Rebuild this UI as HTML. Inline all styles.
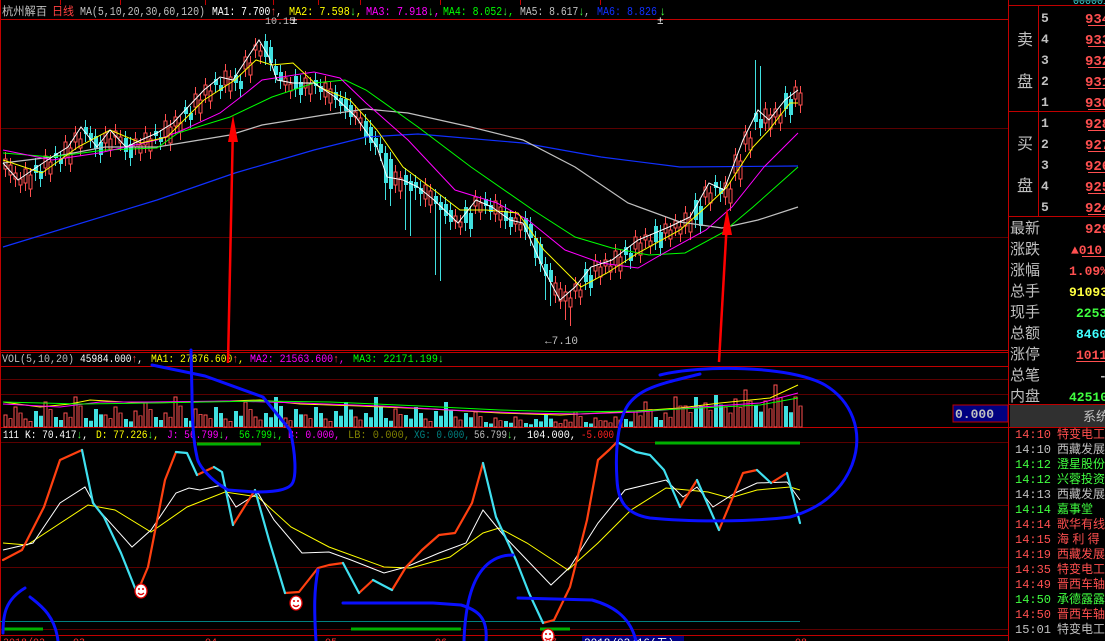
<!DOCTYPE html>
<html><head><meta charset="utf-8"><style>
html,body{margin:0;padding:0;background:#000;overflow:hidden}
svg{display:block}
text{font-family:"Liberation Mono","WenQuanYi Zen Hei","Noto Sans CJK SC",monospace}
.c{font-family:"Liberation Sans","WenQuanYi Zen Hei","Noto Sans CJK SC",sans-serif}
</style></head><body>
<svg width="1105" height="641" viewBox="0 0 1105 641" xmlns="http://www.w3.org/2000/svg" xmlns:xlink="http://www.w3.org/1999/xlink">
<rect width="1105" height="641" fill="#000"/>
<g stroke="#5a0000" stroke-width="1">
<line x1="0" y1="128.5" x2="1008" y2="128.5"/><line x1="0" y1="237.5" x2="1008" y2="237.5"/>
<line x1="0" y1="379.5" x2="1008" y2="379.5"/><line x1="0" y1="394.5" x2="1008" y2="394.5"/>
<line x1="0" y1="442.5" x2="1008" y2="442.5"/><line x1="0" y1="505.5" x2="1008" y2="505.5"/>
<line x1="0" y1="567.5" x2="1008" y2="567.5"/><line x1="0" y1="629.5" x2="1008" y2="629.5"/>
</g>
<g stroke="#c00000" stroke-width="1">
<line x1="0" y1="19.5" x2="1008" y2="19.5"/><line x1="0" y1="350.5" x2="1008" y2="350.5"/>
<line x1="0" y1="352.5" x2="1008" y2="352.5"/><line x1="0" y1="366.5" x2="1008" y2="366.5"/>
<line x1="0" y1="427.5" x2="1008" y2="427.5"/><line x1="0" y1="635.5" x2="1008" y2="635.5"/>
<line x1="0.5" y1="0" x2="0.5" y2="641"/>
<line x1="1008.5" y1="0" x2="1008.5" y2="641"/>
<line x1="205.5" y1="0" x2="205.5" y2="5"/><line x1="273.5" y1="0" x2="273.5" y2="5"/><line x1="318.5" y1="0" x2="318.5" y2="5"/><line x1="360.5" y1="0" x2="360.5" y2="5"/><line x1="60.5" y1="0" x2="60.5" y2="5"/><line x1="120.5" y1="0" x2="120.5" y2="5"/><line x1="440.5" y1="0" x2="440.5" y2="5"/><line x1="520.5" y1="0" x2="520.5" y2="5"/><line x1="600.5" y1="0" x2="600.5" y2="5"/>
</g>
<g id="cd">
<path stroke="#ff5050" stroke-width="1" fill="none" d="M5.5 152V177M15.5 166V187M25.5 162V191M45.5 149V176M65.5 135V166M75.5 126V150M105.5 126V151M115.5 124V145M135.5 132V155M145.5 126V153M165.5 114V145M175.5 110V134M195.5 87V115M205.5 78V103M225.5 64V93M245.5 50V77M255.5 38V58M285.5 71V93M305.5 71V96M325.5 76V105M355.5 105V125M395.5 165V193M425.5 178V207M455.5 209V229M475.5 190V214M495.5 194V222M515.5 211V232M555.5 276V303M565.5 285V320M575.5 277V299M595.5 254V279M605.5 253V274M615.5 244V273M635.5 230V257M645.5 228V248M665.5 217V241M675.5 214V236M685.5 206V234M705.5 180V205M725.5 176V205M735.5 148V181M745.5 125V152M765.5 102V131M775.5 102V125M795.5 80V107"/>
<path stroke="#40e0e0" stroke-width="1" fill="none" d="M35.5 158V181M55.5 146V166M85.5 120V142M95.5 129V157M125.5 131V160M155.5 124V144M185.5 100V122M215.5 72V93M235.5 68V91M265.5 34V65M275.5 59V83M295.5 69V97M315.5 73V94M335.5 85V108M345.5 92V119M365.5 114V145M375.5 131V155M385.5 146V200M405.5 168V230M415.5 175V200M435.5 189V275M445.5 197V224M465.5 200V231M485.5 192V214M505.5 204V229M525.5 211V240M535.5 231V266M545.5 257V300M585.5 262V290M625.5 240V263M655.5 219V250M695.5 193V228M715.5 175V196M755.5 60V130M785.5 86V117"/>
<path stroke="#ff5050" stroke-width="1" fill="#000" d="M4 159h3v10h-3zM14 173h3v6h-3zM24 169h3v14h-3zM44 156h3v12h-3zM64 142h3v16h-3zM74 133h3v9h-3zM104 133h3v10h-3zM114 131h3v6h-3zM134 139h3v8h-3zM144 133h3v12h-3zM164 121h3v16h-3zM174 117h3v9h-3zM194 94h3v13h-3zM204 85h3v10h-3zM224 71h3v14h-3zM244 57h3v12h-3zM254 45h3v5h-3zM284 78h3v7h-3zM304 78h3v10h-3zM324 83h3v14h-3zM354 112h3v5h-3zM394 172h3v13h-3zM424 185h3v14h-3zM454 216h3v5h-3zM474 197h3v9h-3zM494 201h3v13h-3zM514 218h3v6h-3zM554 283h3v12h-3zM564 292h3v9h-3zM574 284h3v7h-3zM594 261h3v10h-3zM604 260h3v6h-3zM614 251h3v14h-3zM634 237h3v12h-3zM644 235h3v5h-3zM664 224h3v9h-3zM674 221h3v7h-3zM684 213h3v13h-3zM704 187h3v10h-3zM724 183h3v14h-3zM734 155h3v18h-3zM744 132h3v12h-3zM764 109h3v14h-3zM774 109h3v8h-3zM794 87h3v12h-3z"/>
<path fill="#40e0e0" d="M34 165h4v8h-4zM54 153h4v5h-4zM84 127h4v7h-4zM94 136h4v13h-4zM124 138h4v14h-4zM154 131h4v5h-4zM184 107h4v7h-4zM214 79h4v6h-4zM234 75h4v8h-4zM264 41h4v16h-4zM274 66h4v9h-4zM294 76h4v13h-4zM314 80h4v6h-4zM334 92h4v8h-4zM344 99h4v12h-4zM364 121h4v16h-4zM374 138h4v9h-4zM384 153h4v30h-4zM404 175h4v10h-4zM414 182h4v6h-4zM434 196h4v8h-4zM444 204h4v12h-4zM464 207h4v16h-4zM484 199h4v7h-4zM504 211h4v10h-4zM524 218h4v14h-4zM534 238h4v20h-4zM544 264h4v12h-4zM584 269h4v13h-4zM624 247h4v8h-4zM654 226h4v16h-4zM694 200h4v20h-4zM714 182h4v6h-4zM754 113h4v9h-4zM784 93h4v16h-4z"/>
</g>
<use xlink:href="#cd" href="#cd" transform="translate(5,6)"/>
<g fill="none">
<polyline stroke="#1030ff" stroke-width="1.2" points="3,247 157,200 235,173 314,150 366,137 418,134 523,143 601,157 680,167 798,166"/>
<polyline stroke="#c0c0c0" stroke-width="1.2" points="3,163 52,157 105,147 157,147 230,135 262,125 324,115 366,109 408,113 471,127 523,140 575,167 628,203 680,222 722,228 758,220 798,207"/>
<polyline stroke="#00ff00" points="3,153 52,157 105,150 157,148 178,133 230,117 272,97 314,83 345,80 366,90 418,127 471,167 533,210 575,237 612,248 649,255 685,253 722,233 753,207 798,167"/>
<polyline stroke="#ff00ff" points="3,150 52,160 99,153 157,140 183,130 220,113 246,93 262,80 314,72 340,78 366,103 408,140 455,190 497,203 528,220 565,250 601,263 638,268 664,253 706,230 732,207 764,167 798,133"/>
<polyline stroke="#ffff00" points="3,160 42,173 78,147 110,130 141,143 167,137 204,100 235,80 256,60 272,65 293,63 319,87 350,100 377,130 403,167 434,190 460,210 486,210 518,213 544,250 581,287 607,273 638,253 680,230 706,207 727,187 753,147 769,130 790,103 798,103"/>
<polyline stroke="#ffffff" points="3,163 18,180 37,167 52,157 68,147 81,127 97,147 110,130 126,147 141,140 157,133 173,123 188,107 204,90 220,77 233,80 246,60 259,40 269,57 277,80 293,83 314,83 335,97 356,117 377,147 387,177 403,180 418,187 434,200 458,223 476,200 492,207 510,220 523,223 544,270 560,300 575,287 591,267 612,260 638,240 669,227 690,217 709,183 724,190 743,140 758,110 769,120 785,100 798,90"/>
</g>
<g id="vb">
<path stroke="#ff5050" fill="none" d="M4 415h3v12h-3zM14 407h3v20h-3zM24 419h3v8h-3zM44 402h3v25h-3zM64 413h3v14h-3zM74 397h3v30h-3zM104 415h3v12h-3zM114 407h3v20h-3zM134 411h3v16h-3zM144 402h3v25h-3zM164 413h3v14h-3zM174 397h3v30h-3zM194 409h3v18h-3zM204 415h3v12h-3zM224 419h3v8h-3zM244 402h3v25h-3zM254 417h3v10h-3zM284 418h3v9h-3zM304 415h3v12h-3zM324 419h3v8h-3zM354 417h3v10h-3zM394 409h3v18h-3zM424 419h3v8h-3zM454 417h3v10h-3zM474 412h3v15h-3zM494 418h3v9h-3zM514 417h3v10h-3zM554 422h3v5h-3zM564 420h3v7h-3zM574 412h3v15h-3zM594 418h3v9h-3zM604 421h3v6h-3zM614 417h3v10h-3zM634 411h3v16h-3zM644 402h3v25h-3zM664 413h3v14h-3zM674 397h3v30h-3zM684 406h3v21h-3zM704 403h3v24h-3zM724 407h3v20h-3zM734 399h3v28h-3zM744 390h3v37h-3zM764 401h3v26h-3zM774 385h3v42h-3zM794 397h3v30h-3z"/>
<path fill="#40e0e0" d="M34 411h4v16h-4zM54 417h4v10h-4zM84 418h4v9h-4zM94 409h4v18h-4zM124 419h4v8h-4zM154 417h4v10h-4zM184 418h4v9h-4zM214 407h4v20h-4zM234 411h4v16h-4zM264 413h4v14h-4zM274 397h4v30h-4zM294 409h4v18h-4zM314 407h4v20h-4zM334 411h4v16h-4zM344 402h4v25h-4zM364 413h4v14h-4zM374 397h4v30h-4zM384 418h4v9h-4zM404 415h4v12h-4zM414 407h4v20h-4zM434 411h4v16h-4zM444 402h4v25h-4zM464 413h4v14h-4zM484 422h4v5h-4zM504 421h4v6h-4zM524 423h4v4h-4zM534 419h4v8h-4zM544 415h4v12h-4zM584 422h4v5h-4zM624 419h4v8h-4zM654 417h4v10h-4zM694 397h4v30h-4zM714 395h4v32h-4zM754 405h4v22h-4zM784 406h4v21h-4z"/>
</g>
<use xlink:href="#vb" href="#vb" transform="translate(5,427) scale(1,0.7) translate(0,-427)"/>
<g fill="none">
<polyline stroke="#ffff00" points="3,402 40,407 70,404 90,400 140,403 200,402 260,400 300,404 360,406 430,409 500,413 560,415 620,412 680,408 720,403 770,398 798,385"/>
<polyline stroke="#ff00ff" points="3,404 60,407 100,402 150,402 230,401 300,403 380,406 450,410 520,413 580,414 640,412 700,407 760,403 798,393"/>
<polyline stroke="#00ff00" points="3,402 80,404 150,403 260,401 330,402 420,406 500,410 570,412 640,411 700,408 760,405 798,398"/>
</g>
<g font-size="12" fill="#c0c0c0">
<text x="2" y="15" class="c" font-size="11.5" textLength="45" lengthAdjust="spacingAndGlyphs" fill="#c0c0c0">杭州解百</text>
<text x="52" y="15" class="c" font-size="11.5" textLength="22" lengthAdjust="spacingAndGlyphs" fill="#ff4040">日线</text>
<text x="80" y="15" textLength="125" lengthAdjust="spacingAndGlyphs">MA(5,10,20,30,60,120)</text>
<text x="212" y="15" fill="#fff" textLength="70" lengthAdjust="spacingAndGlyphs">MA1: 7.700<tspan fill="#ff4040">↑</tspan>,</text>
<text x="289" y="15" fill="#ffff00" textLength="73" lengthAdjust="spacingAndGlyphs">MA2: 7.598<tspan fill="#40ff40">↓</tspan>,</text>
<text x="366" y="15" fill="#ff00ff" textLength="74" lengthAdjust="spacingAndGlyphs">MA3: 7.918<tspan fill="#40ff40">↓</tspan>,</text>
<text x="443" y="15" fill="#00ff00" textLength="71" lengthAdjust="spacingAndGlyphs">MA4: 8.052<tspan fill="#40ff40">↓</tspan>,</text>
<text x="520" y="15" fill="#c0c0c0" textLength="70" lengthAdjust="spacingAndGlyphs">MA5: 8.617<tspan fill="#40ff40">↓</tspan>,</text>
<text x="597" y="15" fill="#1030ff" textLength="60" lengthAdjust="spacingAndGlyphs">MA6: 8.826</text>
<text x="659" y="15" fill="#40ff40">↓</text>
<text x="265" y="24" fill="#c0c0c0" font-size="10">10.15</text>
<text x="291" y="24" fill="#fff" font-size="11">±</text>
<text x="657" y="24" fill="#fff" font-size="11">±</text>
<text x="545" y="344" fill="#c0c0c0" font-size="11">←7.10</text>
</g>
<g font-size="11" fill="#c0c0c0">
<text x="2" y="362" textLength="72" lengthAdjust="spacingAndGlyphs">VOL(5,10,20)</text>
<text x="80" y="362" fill="#fff" textLength="63" lengthAdjust="spacingAndGlyphs">45984.000<tspan fill="#ff4040">↑</tspan>,</text>
<text x="151" y="362" fill="#ffff00" textLength="93" lengthAdjust="spacingAndGlyphs">MA1: 27876.600<tspan fill="#ff4040">↑</tspan>,</text>
<text x="250" y="362" fill="#ff00ff" textLength="95" lengthAdjust="spacingAndGlyphs">MA2: 21563.600<tspan fill="#ff4040">↑</tspan>,</text>
<text x="353" y="362" fill="#00ff00" textLength="91" lengthAdjust="spacingAndGlyphs">MA3: 22171.199<tspan fill="#40ff40">↓</tspan></text>
<text x="3" y="438" fill="#fff" textLength="16" lengthAdjust="spacingAndGlyphs">111</text>
<text x="25" y="438" fill="#fff" textLength="63" lengthAdjust="spacingAndGlyphs">K: 70.417<tspan fill="#40ff40">↓</tspan>,</text>
<text x="96" y="438" fill="#ffff00" textLength="63" lengthAdjust="spacingAndGlyphs">D: 77.226<tspan fill="#40ff40">↓</tspan>,</text>
<text x="167" y="438" fill="#ff00ff" textLength="63" lengthAdjust="spacingAndGlyphs">J: 56.799<tspan fill="#40ff40">↓</tspan>,</text>
<text x="239" y="438" fill="#00ff00" textLength="44" lengthAdjust="spacingAndGlyphs">56.799<tspan fill="#40ff40">↓</tspan>,</text>
<text x="288" y="438" fill="#ff00ff" textLength="52" lengthAdjust="spacingAndGlyphs">B: 0.000,</text>
<text x="348" y="438" fill="#808000" textLength="62" lengthAdjust="spacingAndGlyphs">LB: 0.000,</text>
<text x="414" y="438" fill="#008080" textLength="56" lengthAdjust="spacingAndGlyphs">XG: 0.000,</text>
<text x="474" y="438" fill="#c0c0c0" textLength="44" lengthAdjust="spacingAndGlyphs">56.799<tspan fill="#40ff40">↓</tspan>,</text>
<text x="527" y="438" fill="#fff" textLength="49" lengthAdjust="spacingAndGlyphs">104.000,</text>
<text x="581" y="438" fill="#ff2020" textLength="33" lengthAdjust="spacingAndGlyphs">-5.000</text>
</g>
<line x1="0" y1="621.5" x2="800" y2="621.5" stroke="#008080"/>
<g fill="none">
<polyline stroke="#ffff00" points="3,543 27,545 88,505 115,510 151,532 187,507 225,492 258,497 291,527 329,547 384,567 411,568 450,557 483,533 499,528 527,543 568,570 598,543 631,510 666,488 708,492 730,498 757,490 790,487 800,490"/>
<polyline stroke="#ffffff" points="3,550 33,543 60,503 85,487 96,507 132,547 151,530 176,493 189,488 200,490 222,485 236,507 258,493 274,520 302,553 329,552 351,560 384,573 406,567 439,553 466,543 483,510 505,537 527,560 551,585 570,567 598,523 625,490 666,480 683,497 697,487 713,507 735,493 757,483 787,482 800,500"/>
</g>
<g fill="none" stroke-width="2.2" stroke-linecap="round" stroke-linejoin="round">
<g stroke="#ff4010">
<polyline points="3,560 22,550 44,507 60,460 82,450"/>
<polyline points="137,593 148,567 165,480 176,452"/>
<polyline points="197,475 214,467"/>
<polyline points="233,525 255,490"/>
<polyline points="285,593 299,592 318,568 329,565 343,563"/>
<polyline points="359,593 373,580"/>
<polyline points="392,590 406,567 422,550 439,535 455,533 472,503 483,463"/>
<polyline points="543,623 554,620 570,587 587,520 598,460 609,450 617,442"/>
<polyline points="680,507 697,480"/>
<polyline points="719,530 743,473 757,470"/>
<polyline points="771,483 787,473"/>
</g>
<g stroke="#40e0f0">
<polyline points="82,450 93,503 104,517 121,553 137,593"/>
<polyline points="176,452 187,453 197,475"/>
<polyline points="214,467 222,472 233,525"/>
<polyline points="255,490 269,540 285,593"/>
<polyline points="343,563 359,593"/>
<polyline points="373,580 392,590"/>
<polyline points="483,463 496,517 516,560 529,593 543,623"/>
<polyline points="617,442 636,452 650,455 664,470 680,507"/>
<polyline points="697,480 719,530"/>
<polyline points="757,470 771,483"/>
<polyline points="787,473 800,523"/>
</g>
</g>
<g stroke="#00b000" stroke-width="3">
<line x1="197" y1="444" x2="261" y2="444"/><line x1="655" y1="443" x2="800" y2="443"/>
<line x1="3" y1="629" x2="43" y2="629"/><line x1="351" y1="629" x2="461" y2="629"/><line x1="540" y1="629" x2="570" y2="629"/>
</g>
<g stroke="#e00000" stroke-width="1.3">
<ellipse cx="141" cy="591" rx="6" ry="7" fill="#fff"/><ellipse cx="296" cy="603" rx="6" ry="7" fill="#fff"/><ellipse cx="548" cy="636" rx="6" ry="7" fill="#fff"/>
<path fill="none" d="M138 593Q141 596 144 593M293 605Q296 608 299 605M545 638Q548 641 551 638"/>
</g>
<g fill="#e00000"><circle cx="139" cy="589" r="1"/><circle cx="143" cy="589" r="1"/><circle cx="294" cy="601" r="1"/><circle cx="298" cy="601" r="1"/><circle cx="546" cy="634" r="1"/><circle cx="550" cy="634" r="1"/></g>
<g fill="#ff3030" font-size="10"><text x="3" y="645">2018/02</text><text x="73" y="645">03</text><text x="205" y="645">04</text><text x="325" y="645">05</text><text x="435" y="645">06</text><text x="545" y="645">07</text><text x="795" y="645">08</text></g>
<rect x="582" y="636" width="102" height="6" fill="#000080"/>
<text x="584" y="646" fill="#fff" font-size="11">2018/03/16(五)</text>
<g stroke="#c00000" stroke-width="1" fill="none">
<line x1="1009" y1="5.5" x2="1105" y2="5.5"/><line x1="1009" y1="111.5" x2="1105" y2="111.5"/>
<line x1="1009" y1="216.5" x2="1105" y2="216.5"/><line x1="1038.5" y1="5" x2="1038.5" y2="216"/>
<line x1="1009" y1="404.5" x2="1105" y2="404.5"/><line x1="1009" y1="427.5" x2="1105" y2="427.5"/>
</g>
<rect x="1010" y="405" width="95" height="22" fill="#303030"/>
<text x="1083" y="421" class="c" font-size="13" fill="#c0c0c0">系统</text>
<rect x="953" y="405" width="55" height="17" fill="#000080" stroke="#c00000"/>
<text x="955" y="418" fill="#c0c0c0" font-size="13" font-weight="bold">0.000</text>
<text x="1073" y="4" fill="#40e0e0" font-size="10">000001</text>
<g class="c" font-size="16" fill="#c0c0c0">
<text x="1017" y="45">卖</text><text x="1017" y="87">盘</text><text x="1017" y="149">买</text><text x="1017" y="191">盘</text>
</g>
<g font-size="13" fill="#c0c0c0" font-weight="bold">
<text x="1041" y="22">5</text><text x="1041" y="43">4</text><text x="1041" y="64">3</text><text x="1041" y="85">2</text><text x="1041" y="106">1</text>
<text x="1041" y="127">1</text><text x="1041" y="148">2</text><text x="1041" y="169">3</text><text x="1041" y="190">4</text><text x="1041" y="211">5</text>
</g>
<g font-size="14" fill="#ff5050" font-weight="bold">
<text x="1085" y="23">934</text><text x="1085" y="44">933</text><text x="1085" y="65">932</text><text x="1085" y="86">931</text><text x="1085" y="107">930</text>
<text x="1085" y="128">928</text><text x="1085" y="149">927</text><text x="1085" y="170">926</text><text x="1085" y="191">925</text><text x="1085" y="212">924</text>
<text x="1085" y="233">929</text>
</g>
<g stroke="#ff5050" stroke-width="1"><line x1="1088" y1="25.5" x2="1105" y2="25.5"/><line x1="1088" y1="46.5" x2="1105" y2="46.5"/><line x1="1088" y1="67.5" x2="1105" y2="67.5"/><line x1="1088" y1="88.5" x2="1105" y2="88.5"/><line x1="1088" y1="109.5" x2="1105" y2="109.5"/><line x1="1088" y1="130.5" x2="1105" y2="130.5"/><line x1="1088" y1="151.5" x2="1105" y2="151.5"/><line x1="1088" y1="172.5" x2="1105" y2="172.5"/><line x1="1088" y1="193.5" x2="1105" y2="193.5"/><line x1="1088" y1="214.5" x2="1105" y2="214.5"/><line x1="1082" y1="256.5" x2="1105" y2="256.5"/><line x1="1076" y1="361.5" x2="1105" y2="361.5"/></g>
<g class="c" font-size="15" fill="#c0c0c0">
<text x="1010" y="233">最新</text><text x="1010" y="254">涨跌</text><text x="1010" y="275">涨幅</text><text x="1010" y="296">总手</text><text x="1010" y="317">现手</text><text x="1010" y="338">总额</text><text x="1010" y="359">涨停</text><text x="1010" y="380">总笔</text><text x="1010" y="401">内盘</text>
</g>
<g font-size="13" font-weight="bold">
<text x="1071" y="254" fill="#ff5050">▲010</text>
<text x="1069" y="275" fill="#ff5050">1.09%</text>
<text x="1069" y="296" fill="#ffff40">91093</text>
<text x="1076" y="317" fill="#40ff40">2253</text>
<text x="1076" y="338" fill="#40ffff">8460</text>
<text x="1076" y="359" fill="#ff5050">1011</text>
<text x="1099" y="380" fill="#c0c0c0">-</text>
<text x="1069" y="401" fill="#40ff40">42510</text>
</g>
<g font-size="12">
<text x="1015" y="438" fill="#ff5050">14:10</text><text x="1057" y="438" class="c" fill="#ff5050">特变电工</text>
<text x="1015" y="453" fill="#c0c0c0">14:10</text><text x="1057" y="453" class="c" fill="#c0c0c0">西藏发展</text>
<text x="1015" y="468" fill="#40ff40">14:12</text><text x="1057" y="468" class="c" fill="#40ff40">澄星股份</text>
<text x="1015" y="483" fill="#40ff40">14:12</text><text x="1057" y="483" class="c" fill="#40ff40">兴蓉投资</text>
<text x="1015" y="498" fill="#c0c0c0">14:13</text><text x="1057" y="498" class="c" fill="#c0c0c0">西藏发展</text>
<text x="1015" y="513" fill="#40ff40">14:14</text><text x="1057" y="513" class="c" fill="#40ff40">嘉事堂</text>
<text x="1015" y="528" fill="#ff5050">14:14</text><text x="1057" y="528" class="c" fill="#ff5050">歌华有线</text>
<text x="1015" y="543" fill="#ff5050">14:15</text><text x="1057" y="543" class="c" fill="#ff5050">海 利 得</text>
<text x="1015" y="558" fill="#ff5050">14:19</text><text x="1057" y="558" class="c" fill="#ff5050">西藏发展</text>
<text x="1015" y="573" fill="#ff5050">14:35</text><text x="1057" y="573" class="c" fill="#ff5050">特变电工</text>
<text x="1015" y="588" fill="#ff5050">14:49</text><text x="1057" y="588" class="c" fill="#ff5050">晋西车轴</text>
<text x="1015" y="603" fill="#40ff40">14:50</text><text x="1057" y="603" class="c" fill="#40ff40">承德露露</text>
<text x="1015" y="618" fill="#ff5050">14:50</text><text x="1057" y="618" class="c" fill="#ff5050">晋西车轴</text>
<text x="1015" y="633" fill="#c0c0c0">15:01</text><text x="1057" y="633" class="c" fill="#c0c0c0">特变电工</text>
</g>
<g fill="#ff0000" stroke="#ff0000">
<line x1="228" y1="363" x2="233" y2="125" stroke-width="2.5"/><polygon points="233,115 228,142 238,142" stroke="none"/>
<line x1="719" y1="362" x2="727" y2="220" stroke-width="2.5"/><polygon points="727,208 722,235 732,235" stroke="none"/>
</g>
<g fill="none" stroke="#0a10ff" stroke-width="3" stroke-linecap="round" stroke-linejoin="round">
<path d="M152 365 L205 376 L263 397 L290 430 C296 455 296 475 293 482 C290 490 275 492 255 492 L228 490 C210 480 198 465 197 457 C193 440 192 420 192 395 L191 350"/>
<path d="M660 375 C700 365 790 365 825 385 C850 400 865 430 852 465 C840 495 815 510 790 517 C750 522 690 522 650 518 C625 514 618 500 617 480 C615 450 618 420 628 405 C640 388 660 384 700 374"/>
<path d="M3 633 C3 615 5 600 25 588"/><path d="M30 597 C40 605 55 615 58 641"/>
<path d="M318 570 C314 590 314 610 316 641"/>
<path d="M343 603 L433 603 L461 605 C478 610 488 618 486 641"/>
<path d="M464 641 C465 610 470 585 482 570 C490 560 500 555 513 555"/>
<path d="M518 598 L592 600 C610 605 630 615 636 641"/>
</g>
</svg>
</body></html>
